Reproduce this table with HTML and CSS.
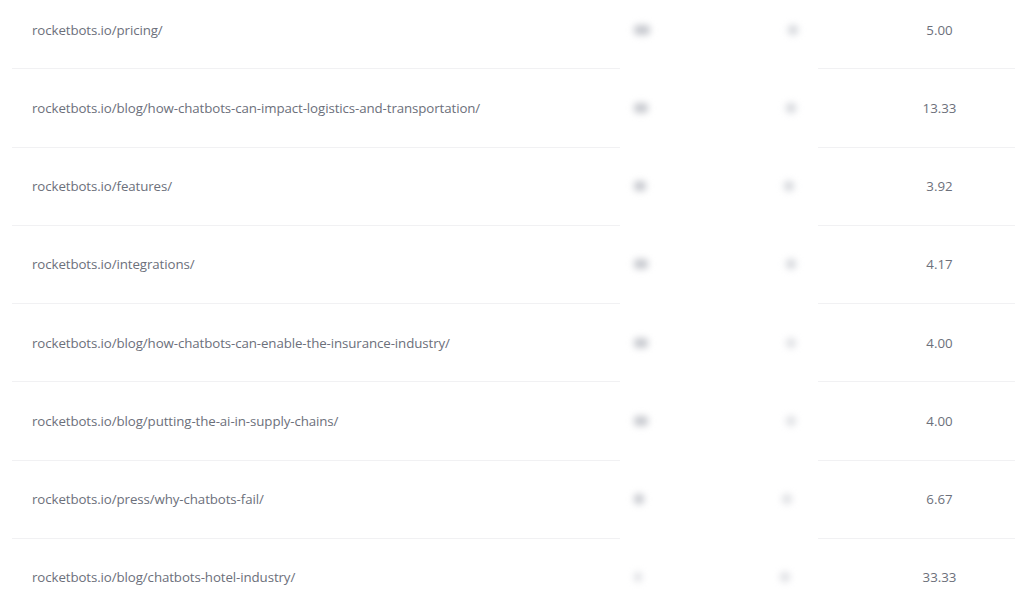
FILE: index.html
```html
<!DOCTYPE html>
<html lang="en">
<head>
    <meta charset="UTF-8">
    <meta name="viewport" content="width=device-width, initial-scale=1.0">
    <title>Top Pages</title>
    <link rel="stylesheet" href="styles.css">
</head>
<body>
    <div class="pages-table">
        <div class="page-row">
            <div class="cell url">rocketbots.io/pricing/</div>
            <div class="cell hidden"><span class="blob" style="width: 16px"></span><span class="blob small"></span></div>
            <div class="cell value">5.00</div>
        </div>
        <div class="page-row">
            <div class="cell url">rocketbots.io/blog/how-chatbots-can-impact-logistics-and-transportation/</div>
            <div class="cell hidden"><span class="blob" style="width: 14px"></span><span class="blob small"></span></div>
            <div class="cell value">13.33</div>
        </div>
        <div class="page-row">
            <div class="cell url">rocketbots.io/features/</div>
            <div class="cell hidden"><span class="blob" style="width: 12px"></span><span class="blob small"></span></div>
            <div class="cell value">3.92</div>
        </div>
        <div class="page-row">
            <div class="cell url">rocketbots.io/integrations/</div>
            <div class="cell hidden"><span class="blob" style="width: 14px"></span><span class="blob small"></span></div>
            <div class="cell value">4.17</div>
        </div>
        <div class="page-row">
            <div class="cell url">rocketbots.io/blog/how-chatbots-can-enable-the-insurance-industry/</div>
            <div class="cell hidden"><span class="blob" style="width: 14px"></span><span class="blob small faint"></span></div>
            <div class="cell value">4.00</div>
        </div>
        <div class="page-row">
            <div class="cell url">rocketbots.io/blog/putting-the-ai-in-supply-chains/</div>
            <div class="cell hidden"><span class="blob" style="width: 14px"></span><span class="blob small faint"></span></div>
            <div class="cell value">4.00</div>
        </div>
        <div class="page-row">
            <div class="cell url">rocketbots.io/press/why-chatbots-fail/</div>
            <div class="cell hidden"><span class="blob" style="width: 10px"></span><span class="blob small faint"></span></div>
            <div class="cell value">6.67</div>
        </div>
        <div class="page-row">
            <div class="cell url">rocketbots.io/blog/chatbots-hotel-industry/</div>
            <div class="cell hidden"><span class="blob faint" style="width: 8px"></span><span class="blob small faint"></span></div>
            <div class="cell value">33.33</div>
        </div>
    </div>
</body>
</html>
```

FILE: styles.css
```css
body {
    margin: 0;
    background-color: #fff;
    font-family: "Open Sans", "Liberation Sans", sans-serif;
    overflow: hidden;
}

.pages-table {
    margin: -9px 9px 0 12px;
}

.page-row {
    display: grid;
    grid-template-columns: 608px 198px 1fr;
    height: 78.25px;
}

.cell {
    display: flex;
    align-items: center;
    font-size: 13.3px;
    color: #6c707b;
    border-bottom: 1px solid #f1f1f3;
}

.url {
    padding-left: 20px;
    letter-spacing: -0.1px;
}

.hidden {
    border-bottom-color: transparent;
    padding-left: 14px;
    gap: 138px;
}

.blob {
    display: inline-block;
    height: 10px;
    background-color: #c6c8ce;
    border-radius: 4px;
    filter: blur(3.5px);
}

.blob.small {
    width: 10px;
    background-color: #d6d8dd;
}

.blob.faint {
    background-color: #e0e1e5;
}

.value {
    justify-content: center;
    padding-left: 46px;
}
```
